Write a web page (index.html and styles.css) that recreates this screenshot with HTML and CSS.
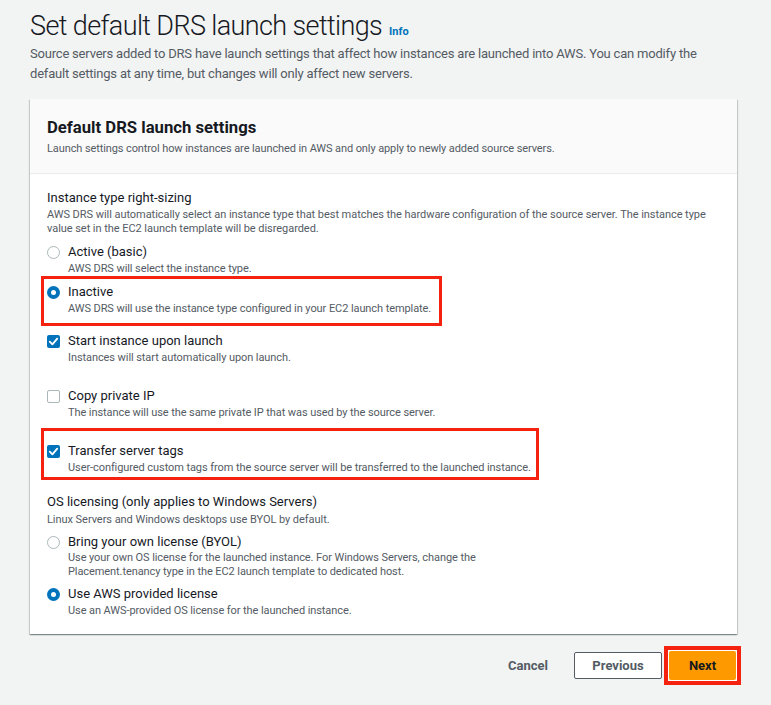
FILE: index.html
```html
<!DOCTYPE html>
<html lang="en">
<head>
<meta charset="utf-8">
<title>Set default DRS launch settings</title>
<link rel="stylesheet" href="styles.css">
</head>
<body>
<div class="page">
  <header class="page-header">
    <h1 class="page-title">Set default DRS launch settings <a class="info-link" href="#">Info</a></h1>
    <p class="page-desc">Source servers added to DRS have launch settings that affect how instances are launched into AWS. You can modify the default settings at any time, but changes will only affect new servers.</p>
  </header>

  <section class="card">
    <div class="card-header">
      <h2 class="card-title">Default DRS launch settings</h2>
      <p class="card-sub">Launch settings control how instances are launched in AWS and only apply to newly added source servers.</p>
    </div>
    <div class="card-body">
      <div class="field">
        <div class="field-label">Instance type right-sizing</div>
        <div class="field-desc">AWS DRS will automatically select an instance type that best matches the hardware configuration of the source server. The instance type value set in the EC2 launch template will be disregarded.</div>
      </div>
      <div class="option opt-first">
        <span class="radio"></span>
        <div class="opt-text">
          <div class="opt-label">Active (basic)</div>
          <div class="opt-desc">AWS DRS will select the instance type.</div>
        </div>
      </div>
      <div class="hl hl-inactive">
        <div class="option">
          <span class="radio checked"></span>
          <div class="opt-text">
            <div class="opt-label">Inactive</div>
            <div class="opt-desc">AWS DRS will use the instance type configured in your EC2 launch template.</div>
          </div>
        </div>
      </div>
      <div class="option opt-start">
        <span class="check checked"><svg viewBox="0 0 14 14" width="13" height="13"><polyline points="3,7.2 5.8,10 11,4" fill="none" stroke="#fff" stroke-width="2" stroke-linecap="round" stroke-linejoin="round"/></svg></span>
        <div class="opt-text">
          <div class="opt-label">Start instance upon launch</div>
          <div class="opt-desc">Instances will start automatically upon launch.</div>
        </div>
      </div>
      <div class="option opt-copy">
        <span class="check"></span>
        <div class="opt-text">
          <div class="opt-label">Copy private IP</div>
          <div class="opt-desc">The instance will use the same private IP that was used by the source server.</div>
        </div>
      </div>
      <div class="hl hl-tags">
        <div class="option">
          <span class="check checked"><svg viewBox="0 0 14 14" width="13" height="13"><polyline points="3,7.2 5.8,10 11,4" fill="none" stroke="#fff" stroke-width="2" stroke-linecap="round" stroke-linejoin="round"/></svg></span>
          <div class="opt-text">
            <div class="opt-label">Transfer server tags</div>
            <div class="opt-desc">User-configured custom tags from the source server will be transferred to the launched instance.</div>
          </div>
        </div>
      </div>
      <div class="field field-os">
        <div class="field-label">OS licensing (only applies to Windows Servers)</div>
        <div class="field-desc field-desc-os">Linux Servers and Windows desktops use BYOL by default.</div>
      </div>
      <div class="option opt-byol">
        <span class="radio"></span>
        <div class="opt-text">
          <div class="opt-label">Bring your own license (BYOL)</div>
          <div class="opt-desc">Use your own OS license for the launched instance. For Windows Servers, change the<br>Placement.tenancy type in the EC2 launch template to dedicated host.</div>
        </div>
      </div>
      <div class="option opt-aws">
        <span class="radio checked"></span>
        <div class="opt-text">
          <div class="opt-label">Use AWS provided license</div>
          <div class="opt-desc">Use an AWS-provided OS license for the launched instance.</div>
        </div>
      </div>
    </div>
  </section>

  <footer class="actions">
    <button class="btn btn-link" type="button">Cancel</button>
    <button class="btn btn-normal" type="button">Previous</button>
    <span class="hl-next"><button class="btn btn-primary" type="button">Next</button></span>
  </footer>
</div>
</body>
</html>
```

FILE: styles.css
```css
* { box-sizing: border-box; }
html, body { margin: 0; padding: 0; }
body {
  background: #f2f3f3;
  font-family: Roboto, "Liberation Sans", Arial, sans-serif;
  color: #16191f;
  width: 771px;
  height: 705px;
  overflow: hidden;
}
.page { padding: 8px 34px 0 30px; }

.page-title {
  margin: 0;
  font-size: 27px;
  font-weight: 300;
  line-height: 36px;
  letter-spacing: -0.62px;
  color: #16191f;
}
.info-link {
  font-size: 11px;
  font-weight: 700;
  color: #0073bb;
  text-decoration: none;
  letter-spacing: 0;
  margin-left: 1px;
}
.page-desc {
  margin: -6px 0 0;
  font-size: 13px;
  line-height: 20px;
  color: #545b64;
  letter-spacing: -0.2px;
}

.card {
  margin-top: 15px;
  width: 707px;
  background: #fff;
  box-shadow: 0 1px 1px 0 rgba(0,28,36,.3), 1px 1px 1px 0 rgba(0,28,36,.15), -1px 1px 1px 0 rgba(0,28,36,.15);
}
.card-header {
  background: #fafafa;
  padding: 18px 17px 17px;
  border-bottom: 1px solid #eaeded;
}
.card-title {
  margin: 0;
  font-size: 16.7px;
  font-weight: 700;
  line-height: 22px;
}
.card-sub {
  margin: 2px 0 0;
  font-size: 11px;
  line-height: 15px;
  color: #545b64;
  letter-spacing: -0.1px;
}
.card-body { padding: 15px 17px 16px; }

.field-label { font-size: 13px; line-height: 18px; }
.field-desc { font-size: 11px; line-height: 14px; color: #545b64; margin-top: 1px; letter-spacing: -0.05px; }

.option { display: flex; align-items: flex-start; }
.opt-text { padding-left: 8px; }
.opt-label { font-size: 13px; line-height: 18px; }
.opt-desc { font-size: 11px; line-height: 15px; color: #545b64; letter-spacing: -0.08px; }

.radio, .check {
  flex: none;
  width: 13px;
  height: 13px;
  margin-top: 3px;
  background: #fff;
  display: block;
}
.radio { border-radius: 50%; border: 1.5px solid #aab7b8; }
.radio.checked { border: 4px solid #0073bb; }
.check { border-radius: 2px; border: 1.5px solid #aab7b8; }
.check.checked { border: none; background: #0073bb; }
.check svg { display: block; }

.opt-first { margin-top: 7px; }
.hl {
  width: fit-content;
  border: 3px solid #f5220f;
}
.hl-inactive { margin: 0 0 -10px -6px; padding: 4px 8px 7px 3px; }
.opt-start { margin-top: 16px; }
.opt-copy { margin-top: 22px; }
.hl-tags { margin: 8px 0 0 -6px; padding: 11px 5px 2px 3px; }
.field-os { margin-top: 13px; }
.field-desc-os { margin-top: 2px; }
.opt-byol { margin-top: 6px; }
.opt-byol .opt-desc { line-height: 14px; }
.opt-aws { margin-top: 6px; }

.actions {
  display: flex;
  justify-content: flex-end;
  align-items: center;
  width: 707px;
  margin-top: 12px;
}
.btn {
  font-family: inherit;
  font-size: 13px;
  font-weight: 700;
  border-radius: 2px;
  cursor: pointer;
}
.btn-link {
  background: none;
  border: none;
  color: #545b64;
  padding: 0;
  margin-right: 26px;
}
.btn-normal {
  background: #fff;
  border: 1px solid #545b64;
  color: #545b64;
  width: 88px;
  height: 27px;
  margin-right: 2px;
}
.hl-next {
  display: block;
  border: 4px solid #f5220f;
  padding: 1px;
  background: #fff;
  margin-right: -4px;
}
.btn-primary {
  display: block;
  background: #ff9900;
  border: none;
  color: #16191f;
  width: 67px;
  height: 29px;
}
```
